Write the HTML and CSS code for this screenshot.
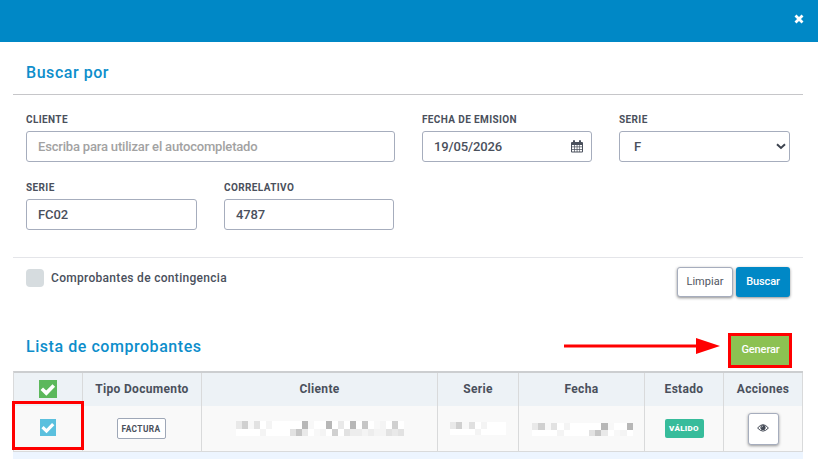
FILE: index.html
```
<!DOCTYPE html>
<html lang="es">
<head>
<meta charset="utf-8">
<title>Comprobantes</title>
<link rel="stylesheet" href="styles.css">
</head>
<body>
<header class="topbar"><svg class="close" width="10" height="10" viewBox="0 0 10 10"><path d="M1.500 1.500l7 7M8.500 1.500l-7 7" stroke="#fff" stroke-width="2.800"/></svg></header>
<main class="modal">
  <h2 class="title search-title">Buscar por</h2>
  <section class="filters">
    <div class="field wide"><label>CLIENTE</label><div class="input placeholder"><span>Escriba para utilizar el autocompletado</span></div></div>
    <div class="field"><label>FECHA DE EMISION</label><div class="input date"><span>19/05/2026</span>
      <svg width="12" height="13" viewBox="0 0 12 13"><path fill="#4a505c" fill-rule="evenodd" d="M1 2h1V1q0-1 1-1t1 1v1h4V1q0-1 1-1t1 1v1h1q1 0 1 1v8.500q0 1-1 1H1q-1 0-1-1V3q0-1 1-1zM1 5v1.500h2V5zm2.700 0v1.500h2V5zm2.700 0v1.500h2V5zm2.600 0v1.500h2V5zM1 7.300v1.700h2V7.300zm2.700 0v1.700h2V7.300zm2.700 0v1.700h2V7.300zm2.600 0v1.700h2V7.300zM1 9.800v1.700h2V9.800zm2.700 0v1.700h2V9.800zm2.700 0v1.700h2V9.800zm2.600 0v1.700h2V9.800z"/></svg></div></div>
    <div class="field"><label>SERIE</label><div class="input select"><span>F</span>
      <svg width="10" height="7" viewBox="0 0 10 7"><path d="M1 1.300l4 3.700 4-3.700" fill="none" stroke="#3c424e" stroke-width="2"/></svg></div></div>
    <div class="field"><label>SERIE</label><div class="input"><span>FC02</span></div></div>
    <div class="field second"><label>CORRELATIVO</label><div class="input"><span>4787</span></div></div>
  </section>
  <section class="actions">
    <span class="box"></span><span class="check-label">Comprobantes de contingencia</span>
    <button class="btn light">Limpiar</button><button class="btn primary">Buscar</button>
  </section>
  <section class="list-head">
    <h2 class="title">Lista de comprobantes</h2>
    <svg class="arrow" width="156" height="16" viewBox="0 0 156 16"><path d="M0 8h134" stroke="#f00" stroke-width="3"/><path d="M132 0l24 8-24 8z" fill="#f00"/></svg>
    <button class="generate">Generar</button>
  </section>
  <table>
    <colgroup><col class="c1"><col class="c2"><col class="c3"><col class="c4"><col class="c5"><col class="c6"><col class="c7"></colgroup>
    <thead><tr>
      <th><svg class="tick all" width="18" height="18" viewBox="0 0 18 18"><path fill="#5cb85c" d="M0 0h18v18H0z"/><path d="M2.800 8.800l4.500 4.300 7.500-7.700" fill="none" stroke="#fff" stroke-width="3.600"/></svg></th>
      <th>Tipo Documento</th><th>Cliente</th><th>Serie</th><th>Fecha</th><th>Estado</th><th>Acciones</th>
    </tr></thead>
    <tbody><tr>
      <td class="marked"><svg class="tick one" width="16" height="17" viewBox="0 0 16 17"><path fill="#5bc0de" d="M0 0h16v17H0z"/><path d="M2.500 8.200l4 3.900 6.700-7" fill="none" stroke="#fff" stroke-width="3.200"/></svg></td>
      <td><span class="tag">FACTURA</span></td>
      <td><svg class="mosaic client" width="168" height="15" viewBox="0 0 28 15" preserveAspectRatio="none" shape-rendering="crispEdges"><path fill="#fff" d="M0 0h28v8H0zM0 8h28v7H0z"/><path fill="#e9e9e9" d="M0 0h1v8H0zM17 0h1v8h-1zM11 8h1v7h-1zM26 8h1v7h-1z"/><path fill="#d0d0d0" d="M1 0h1v8H1zM26 0h1v8h-1zM16 8h1v7h-1z"/><path fill="#f8f8f8" d="M2 0h1v8H2zM12 0h1v8h-1zM23 0h1v8h-1zM13 8h1v7h-1z"/><path fill="#e2e2e2" d="M3 0h1v8H3zM9 8h1v7H9zM18 8h1v7h-1zM25 8h1v7h-1zM27 8h1v7h-1z"/><path fill="#f4f4f4" d="M5 0h1v8H5zM24 0h1v8h-1zM4 8h1v7H4zM14 8h1v7h-1zM21 8h1v7h-1zM23 8h2v7h-2z"/><path fill="#b7b7b7" d="M11 0h1v8h-1zM15 0h1v8h-1zM19 0h1v8h-1z"/><path fill="#c6c6c6" d="M21 0h1v8h-1zM10 8h1v7h-1z"/><path fill="#ededed" d="M19 8h2v7h-2zM22 8h1v7h-1z"/></svg></td>
      <td><svg class="mosaic series" width="56" height="13" viewBox="0 0 9 13" preserveAspectRatio="none" shape-rendering="crispEdges"><path fill="#fff" d="M0 0h9v13H0z"/><path fill="#e9e9e9" d="M0 0h1v7H0z"/><path fill="#d0d0d0" d="M1 0h1v7H1z"/><path fill="#f8f8f8" d="M2 0h1v7H2z"/><path fill="#e0e0e0" d="M3 0h1v7H3z"/><path fill="#f4f4f4" d="M5 0h1v7H5zM4 7h1v6H4z"/></svg></td>
      <td><svg class="mosaic day" width="101" height="13" viewBox="0 0 16 13" preserveAspectRatio="none" shape-rendering="crispEdges"><path fill="#fff" d="M0 0h16v13H0z"/><path fill="#e9e9e9" d="M0 0h1v7H0zM11 7h1v6h-1z"/><path fill="#d0d0d0" d="M1 0h1v7H1z"/><path fill="#f8f8f8" d="M2 0h1v7H2zM12 0h1v7h-1zM13 7h1v6h-1z"/><path fill="#e2e2e2" d="M3 0h1v7H3zM9 7h1v6H9z"/><path fill="#f4f4f4" d="M5 0h1v7H5zM4 7h1v6H4zM14 7h1v6h-1z"/><path fill="#b7b7b7" d="M11 0h1v7h-1zM15 0h1v7h-1z"/><path fill="#c6c6c6" d="M10 7h1v6h-1z"/></svg></td>
      <td><span class="status">VÁLIDO</span></td>
      <td><button class="view"><svg width="12" height="8" viewBox="0 0 12 8"><path d="M.6 4Q6-2.600 11.400 4 6 10.200.6 4z" fill="none" stroke="#424854" stroke-width="1"/><circle cx="6" cy="3.500" r="2.600" fill="#424854"/><path d="M4.700 3.400Q4.800 2.100 6 2" fill="none" stroke="#fff" stroke-width=".6"/></svg></button></td>
    </tr></tbody>
  </table>
  <div class="next-row"></div>
</main>
</body>
</html>
```
FILE: styles.css
```
*, *::after { box-sizing: border-box; }
body { margin: 0; width: 818px; height: 469px; overflow: hidden; background: #fff; color: #4a505c; font-family: Roboto, sans-serif; }
.topbar { height: 42px; background: #0088c6; display: flex; justify-content: flex-end; padding: 14px 14px 0 0; }
.modal { margin: 0 15px 0 13px; }
.title { margin: 0; padding-left: 13px; font-size: 16px; font-weight: 500; letter-spacing: .55px; line-height: 20px; color: #0d8ecb; }
.search-title { height: 53px; padding-top: 21px; border-bottom: 1px solid #c6c6c9; }
.filters { display: grid; grid-template-columns: 171px 171px 170px 171px; column-gap: 27px; row-gap: 20px; height: 162px; padding: 18px 0 0 13px; align-content: start; }
.field { height: 48px; }
.wide { grid-column: span 2; }
.second { width: 170px; }
.wide .input { width: 369px; }
.field label { display: block; height: 18px; font-size: 10px; font-weight: 700; line-height: 13px; letter-spacing: .38px; }
.input { height: 31px; border: 1px solid #a6adbd; border-radius: 3px; padding: 0 11px; display: flex; align-items: center; justify-content: space-between; font-size: 13px; font-weight: 500; letter-spacing: -.1px; line-height: 29px; }
.placeholder { color: #a2a2a2; letter-spacing: -.18px; }
.date { padding-right: 8px; letter-spacing: -.13px; }
.select { padding: 0 3px 0 14px; }
.actions { height: 75px; border-top: 1px solid #e4e5e9; display: flex; align-items: flex-start; padding: 9px 13px 0; }
.box { width: 18px; height: 18px; margin-top: 2px; border-radius: 4px; background: #d6dcdf; }
.check-label { margin: 3px auto 0 7px; font-size: 12px; font-weight: 500; line-height: 16px; letter-spacing: .3px; }
.btn { height: 30px; border-radius: 3px; padding: 0 0 1px; font: 400 11px/28px Roboto, sans-serif; letter-spacing: .05px; box-shadow: 0 1px 3px rgba(0,0,0,.45); }
.light { width: 56px; margin-right: 3px; border: 1px solid #a6adbd; background: #fff; color: #505661; }
.primary { width: 54px; border: 0; background: #0088c6; color: #fff; font-weight: 500; letter-spacing: -.1px; }
.list-head { height: 39px; display: flex; align-items: flex-start; }
.list-head .title { padding-top: 5px; margin-right: auto; }
.arrow { margin: 6px 8px 0 0; }
.generate { width: 64px; height: 35px; margin: 1px 11px 0 0; padding: 0 0 2px 1px; border: 3px solid #f00; background: #8cc152; color: #fff; font: 500 11px/20px Roboto, sans-serif; letter-spacing: -.1px; }
table { width: 790px; table-layout: fixed; border-collapse: separate; border-spacing: 0; border-top: 2px solid #ccced0; border-left: 1px solid #d9dadb; }
.c1 { width: 69px; } .c2 { width: 119px; } .c3 { width: 236px; } .c4 { width: 81px; } .c5 { width: 126px; } .c6 { width: 79px; } .c7 { width: 79px; }
th, td { padding: 0; border-right: 1px solid #d9dadb; text-align: center; vertical-align: middle; }
th { height: 33px; padding-bottom: 1px; background: #edf2f6; font-size: 12px; font-weight: 700; letter-spacing: .32px; }
td { height: 46px; background: #f9f9f9; border-bottom: 1px solid #d9dadb; }
.tick, .mosaic { display: block; margin: 0 auto; }
.all { margin-bottom: 1px; }
.one { margin-bottom: 2px; }
.marked { position: relative; }
.marked::after { content: ""; position: absolute; left: -2px; top: -5px; width: 72px; height: 49px; border: 3px solid #f00; }
.client { margin-left: 34px; }
.series { margin-left: 12px; }
.day { margin-left: 13px; margin-top: 1px; }
.tag { display: block; width: 49px; height: 21px; margin: 0 auto; position: relative; left: -1px; border: 1px solid #9ea7b7; border-radius: 2px; background: #fff; font-size: 8.300px; font-weight: 700; line-height: 20px; letter-spacing: .42px; }
.status { display: block; width: 39px; height: 19px; margin: 0 auto; border-radius: 2px; background: #37bc9b; color: #fff; font-size: 8px; font-weight: 900; line-height: 20px; letter-spacing: .32px; }
.view { display: flex; align-items: center; justify-content: center; width: 31px; height: 32px; margin: 0 auto; padding: 0 0 1px; border: 1px solid #a6adbd; border-radius: 3px; background: #fff; box-shadow: 0 1px 3px rgba(0,0,0,.4); }
.next-row { height: 7px; background: #edf5ff; }
```
